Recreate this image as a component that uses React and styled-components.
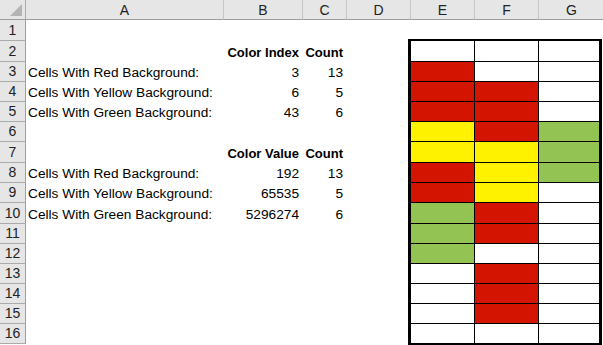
import styled, { createGlobalStyle } from "styled-components";

const GlobalStyle = createGlobalStyle`
  body {
    margin: 0;
    background: white;
    font-family: "Liberation Sans", Arial, sans-serif;
    overflow: hidden;
  }
`;

const RED = "#d21400";
const YELLOW = "#fff200";
const GREEN = "#92c353";

const HEAD_COLS = "26px 198px 79px 44px 64px 64px 64px 66px";
const BODY_COLS = "26px 197px 79px 44px 62px";

const StyledSheet = styled.div`
  display: flex;
  flex-direction: column;
  width: 603px;
  height: 345px;
  overflow: hidden;
  background: white;
`;

const StyledHeaderRow = styled.div`
  display: grid;
  grid-template-columns: ${HEAD_COLS};
  height: 20px;
`;

const StyledCorner = styled.div`
  position: relative;
  background: #e6e6e6;
  border-right: 1px solid #ababab;
  border-bottom: 1px solid #9e9e9e;
  &::after {
    content: "";
    position: absolute;
    right: 3px;
    bottom: 3px;
    width: 12px;
    height: 12px;
    background: #b4b4b4;
    clip-path: polygon(100% 0, 100% 100%, 0 100%);
  }
`;

const StyledColHead = styled.div`
  display: flex;
  align-items: center;
  justify-content: center;
  background: #e6e6e6;
  border-right: 1px solid #c6c6c6;
  border-bottom: 1px solid #9e9e9e;
  font-size: 14px;
  color: #222;
`;

const StyledBody = styled.div`
  display: flex;
`;

const StyledLeftGrid = styled.div`
  display: grid;
  grid-template-columns: ${BODY_COLS};
  grid-auto-rows: min-content;
`;

const StyledRowHead = styled.div`
  display: flex;
  align-items: flex-end;
  justify-content: center;
  height: ${(p) => p.$h}px;
  box-sizing: border-box;
  padding-bottom: 2px;
  background: #e6e6e6;
  border-right: 1px solid #9e9e9e;
  border-bottom: 1px solid #ababab;
  font-size: 14px;
  color: #222;
`;

const StyledCell = styled.div`
  display: flex;
  align-items: flex-end;
  justify-content: ${(p) => (p.$right ? "flex-end" : "flex-start")};
  height: ${(p) => p.$h}px;
  box-sizing: border-box;
  padding: 0 3px 2px 2px;
  font-size: ${(p) => (p.$bold ? "13px" : "13.7px")};
  font-weight: ${(p) => (p.$bold ? 700 : 400)};
  color: #000;
  white-space: nowrap;
`;

const StyledRight = styled.div`
  display: flex;
  flex-direction: column;
  margin-top: 19px;
`;

const StyledBox = styled.div`
  display: grid;
  grid-template-columns: 63px 63px 60px;
  grid-template-rows: ${(p) => p.$rows};
  gap: 1px;
  width: 188px;
  background: #000;
  border: 3px solid #000;
  border-top-width: 2px;
  border-bottom-width: 2px;
`;

const StyledFill = styled.div`
  background: ${(p) => p.$color || "#fff"};
`;

const rowHeights = [21, 21, 20, 20, 20, 20, 21, 20, 20, 21, 20, 20, 20, 20, 20, 20];

const rows = {
  2: ["", "Color Index", "Count", true],
  3: ["Cells With Red Background:", "3", "13"],
  4: ["Cells With Yellow Background:", "6", "5"],
  5: ["Cells With Green Background:", "43", "6"],
  7: ["", "Color Value", "Count", true],
  8: ["Cells With Red Background:", "192", "13"],
  9: ["Cells With Yellow Background:", "65535", "5"],
  10: ["Cells With Green Background:", "5296274", "6"],
};

const C = { R: RED, Y: YELLOW, G: GREEN, W: "" };
const pattern = [
  "WWW", "RWW", "RRW", "RRW", "YRG", "YYG", "RYG", "RYW",
  "GRW", "GRW", "GWW", "WRW", "WRW", "WRW", "WWW",
];

const App = () => {
  // box rows follow the sheet rows 2..16, minus the 1px line between them
  const boxRows = rowHeights.slice(1).map((h) => `${h - 1}px`).join(" ");
  return (
    <>
      <GlobalStyle />
      <StyledSheet>
        <StyledHeaderRow>
          <StyledCorner />
          {["A", "B", "C", "D", "E", "F", "G"].map((l) => (
            <StyledColHead key={l}>{l}</StyledColHead>
          ))}
        </StyledHeaderRow>
        <StyledBody>
          <StyledLeftGrid>
            {rowHeights.map((h, i) => {
              const n = i + 1;
              const r = rows[n] || ["", "", ""];
              return [
                <StyledRowHead key={`h${n}`} $h={h}>{n}</StyledRowHead>,
                <StyledCell key={`a${n}`} $h={h}>{r[0]}</StyledCell>,
                <StyledCell key={`b${n}`} $h={h} $right $bold={r[3]}>{r[1]}</StyledCell>,
                <StyledCell key={`c${n}`} $h={h} $right $bold={r[3]}>{r[2]}</StyledCell>,
                <StyledCell key={`d${n}`} $h={h} />,
              ];
            })}
          </StyledLeftGrid>
          <StyledRight>
            <StyledBox $rows={boxRows}>
              {pattern.map((p, ri) =>
                p.split("").map((ch, ci) => (
                  <StyledFill key={`${ri}-${ci}`} $color={C[ch]} />
                ))
              )}
            </StyledBox>
          </StyledRight>
        </StyledBody>
      </StyledSheet>
    </>
  );
};

export default App;
